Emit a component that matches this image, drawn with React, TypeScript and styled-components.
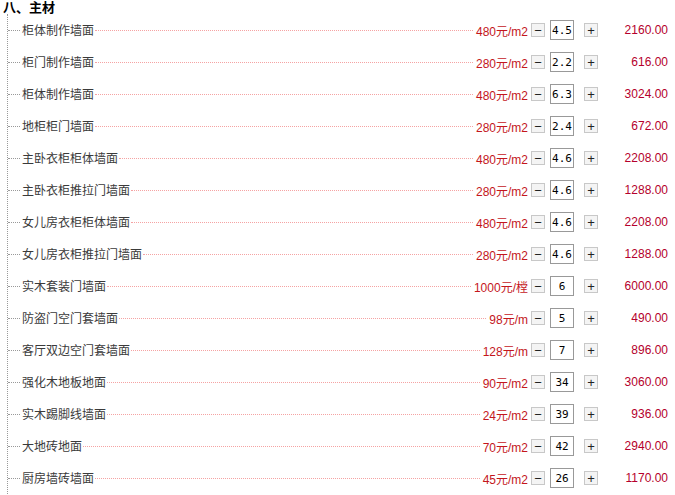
import styled, { createGlobalStyle } from "styled-components";

interface IItem {
  name: string;
  price: number;
  unit: string;
  qty: string;
}

const items: IItem[] = [
  { name: "柜体制作墙面", price: 480, unit: "m2", qty: "4.5" },
  { name: "柜门制作墙面", price: 280, unit: "m2", qty: "2.2" },
  { name: "柜体制作墙面", price: 480, unit: "m2", qty: "6.3" },
  { name: "地柜柜门墙面", price: 280, unit: "m2", qty: "2.4" },
  { name: "主卧衣柜柜体墙面", price: 480, unit: "m2", qty: "4.6" },
  { name: "主卧衣柜推拉门墙面", price: 280, unit: "m2", qty: "4.6" },
  { name: "女儿房衣柜柜体墙面", price: 480, unit: "m2", qty: "4.6" },
  { name: "女儿房衣柜推拉门墙面", price: 280, unit: "m2", qty: "4.6" },
  { name: "实木套装门墙面", price: 1000, unit: "樘", qty: "6" },
  { name: "防盗门空门套墙面", price: 98, unit: "m", qty: "5" },
  { name: "客厅双边空门套墙面", price: 128, unit: "m", qty: "7" },
  { name: "强化木地板地面", price: 90, unit: "m2", qty: "34" },
  { name: "实木踢脚线墙面", price: 24, unit: "m2", qty: "39" },
  { name: "大地砖地面", price: 70, unit: "m2", qty: "42" },
  { name: "厨房墙砖墙面", price: 45, unit: "m2", qty: "26" },
];

const GlobalStyle = createGlobalStyle`
  body {
    margin: 0;
    background: #fff;
    font-family: Arial, "Liberation Sans", "Noto Sans CJK SC", sans-serif;
    font-size: 12px;
    color: #333;
  }
`;

const Wrap = styled.div`
  width: 675px;
  padding-right: 7px;
  box-sizing: border-box;
`;

const Heading = styled.div`
  line-height: 14px;
  padding-left: 3px;
  font-size: 13px;
  font-weight: bold;
  color: #000;
  font-family: "Noto Sans CJK SC", sans-serif;
`;

const List = styled.ul`
  list-style: none;
  margin: 0 0 0 7px;
  padding: 0;
  border-left: 1px dotted #999;
`;

const Row = styled.li`
  display: flex;
  align-items: center;
  height: 32px;
`;

const Branch = styled.span`
  width: 12px;
  border-top: 1px dotted #999;
  margin-right: 2px;
`;

const Name = styled.span`
  font-family: "Noto Sans CJK SC", sans-serif;
  line-height: 14px;
  color: #3a3a3a;
`;

const Leader = styled.span`
  flex: 1;
  border-top: 1px dotted #f5a3a3;
  margin: 0 3px 0 1px;
`;

const Price = styled.span`
  color: #c4161c;
  white-space: nowrap;
  font-family: "Liberation Sans", "Noto Sans CJK SC", sans-serif;
`;

const StepBtn = styled.span<{ gap: number }>`
  width: 12px;
  height: 12px;
  margin-left: ${(p) => p.gap}px;
  border: 1px solid #c8c8c8;
  background: #f4f4f4;
  display: flex;
  align-items: center;
  justify-content: center;
  font-size: 13px;
  line-height: 1;
  color: #222;
`;

const Qty = styled.span`
  width: 22px;
  height: 18px;
  margin-left: 5px;
  border: 1px solid #999;
  display: flex;
  align-items: center;
  justify-content: center;
  font-family: "DejaVu Sans Mono", monospace;
  font-size: 11px;
  color: #000;
`;

const Total = styled.span`
  width: 70px;
  text-align: right;
  color: #b5002c;
  font-family: "Liberation Sans", sans-serif;
`;

function App() {
  return (
    <Wrap>
      <GlobalStyle />
      <Heading>八、主材</Heading>
      <List>
        {items.map((it, i) => (
          <Row key={i}>
            <Branch />
            <Name>{it.name}</Name>
            <Leader />
            <Price>
              {it.price}元/{it.unit}
            </Price>
            <StepBtn gap={3}>−</StepBtn>
            <Qty>{it.qty}</Qty>
            <StepBtn gap={10}>+</StepBtn>
            <Total>{(it.price * parseFloat(it.qty)).toFixed(2)}</Total>
          </Row>
        ))}
      </List>
    </Wrap>
  );
}

export default App;
